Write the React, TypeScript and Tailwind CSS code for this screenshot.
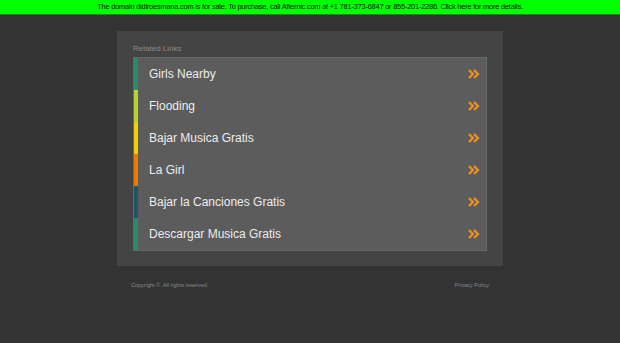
import React from "react";

const links = [
  { t: "Girls Nearby", c: "bg-[#2a8a6c]" },
  { t: "Flooding", c: "bg-[#b5d334]" },
  { t: "Bajar Musica Gratis", c: "bg-[#f4d000]" },
  { t: "La Girl", c: "bg-[#ef7a00]" },
  { t: "Bajar la Canciones Gratis", c: "bg-[#1f5566]" },
  { t: "Descargar Musica Gratis", c: "bg-[#2a8a6c]" },
];

function Chev() {
  return (
    <svg width="12" height="10" viewBox="0 0 12 10">
      <path d="M1 1 L5 5 L1 9" fill="none" stroke="#f0901e" strokeWidth="2.2" />
      <path d="M6 1 L10 5 L6 9" fill="none" stroke="#f0901e" strokeWidth="2.2" />
    </svg>
  );
}

export default function App() {
  return (
    <div className="w-[620px] h-[343px] bg-[#333333] overflow-hidden" style={{ fontFamily: '"Liberation Sans", Arial, sans-serif' }}>
      <div className="h-[15px] bg-[#00ff00] border-b border-[#1a8a1a] flex items-center justify-center text-[7.5px] text-[#111] tracking-[-0.25px]">
        The domain didiroesmana.com is for sale. To purchase, call Afternic.com at +1 781-373-6847 or 855-201-2286. Click here for more details.
      </div>
      <div className="ml-[117px] mt-[16px] w-[386px] h-[235px] bg-[#444444] pt-[13px] px-[16px]">
        <div className="text-[8px] text-[#8a8a8a] h-[13px] leading-[10px]">Related Links</div>
        <div className="border border-[#5f6b66] bg-[#5c5c5c]">
          {links.map((l) => (
            <div key={l.t} className="flex items-center h-[32px] pr-[6px]">
              <div className={`w-[4px] h-full ${l.c}`} />
              <div className="flex-1 pl-[11px] text-[12px] text-[#ececec]">{l.t}</div>
              <Chev />
            </div>
          ))}
        </div>
      </div>
      <div className="ml-[131px] w-[358px] mt-[15px] flex justify-between text-[5.5px] text-[#8a8a8a]">
        <span>Copyright ©. All rights reserved.</span>
        <span>Privacy Policy</span>
      </div>
    </div>
  );
}
